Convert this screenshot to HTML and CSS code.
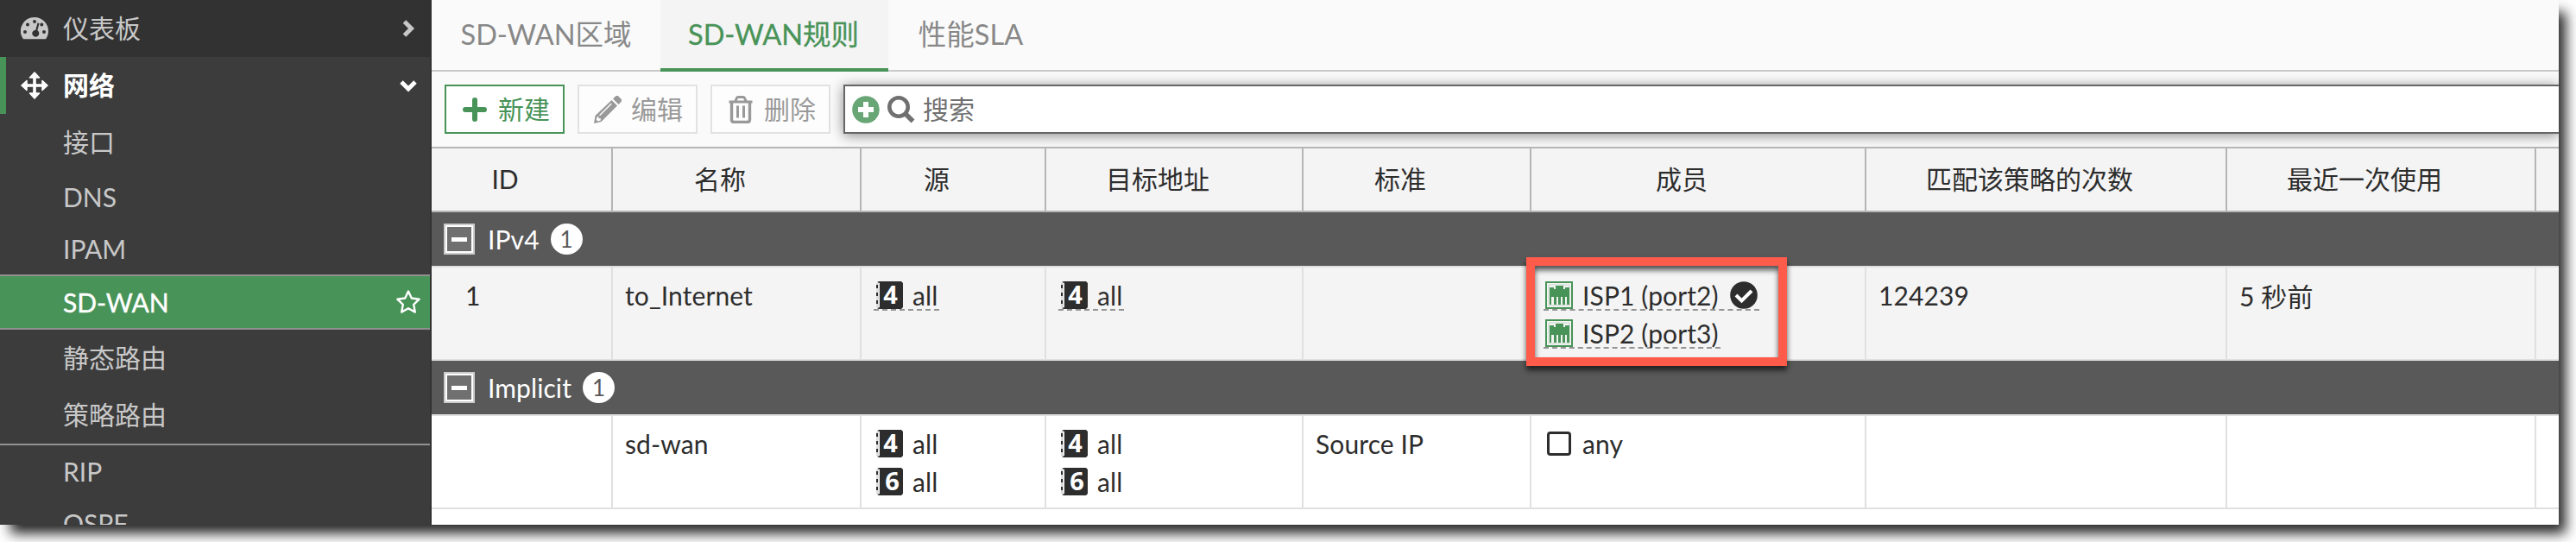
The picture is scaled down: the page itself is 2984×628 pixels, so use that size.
FILE: index.html
```html
<!DOCTYPE html>
<html lang="zh-CN">
  <head>
    <meta charset="UTF-8" />
    <meta name="viewport" content="width=device-width, initial-scale=1.0" />
    <link rel="stylesheet" href="styles.css">
    <title>SD-WAN规则</title>
  </head>
  <body>
    <!-- shared icons -->
    <svg class="sprite">
      <symbol id="book" viewBox="0 0 32 32">
        <path d="M1 2h3v28H1z" fill="#ddd" />
        <path d="M2 4v26" stroke="#2d2d2d" stroke-width="2" stroke-dasharray="4 5" />
        <path d="M4 0h26l2 2v28l-2 2H4l-2-1 3-1V2L2 1z" fill="#2d2d2d" />
      </symbol>
      <symbol id="port" viewBox="0 0 32 32">
        <path d="M1 1h30v30H1z" fill="#f4f4f4" stroke="#489358" stroke-width="2" />
        <path d="M4 4h24v24H4z" fill="none" stroke="#c4d9c8" />
        <path d="M5 7h5v2h2V5h9v4h2V7h5v20h-3v-9h-2v9h-3v-9h-2v9h-3v-9h-2v9h-3v-9H7v9H5z" fill="#489358" />
      </symbol>
    </svg>

    <div class="window">
      <nav class="sidebar">
        <a class="menu">
          <svg viewBox="0 0 32 32" width="32" height="32">
            <path fill="currentColor" fill-rule="evenodd" d="M16 3a16 16 0 0 1 16 16c0 3-.8 6-2.400 8.500-.3.500-.8.700-1.300.7H3.700c-.5 0-1-.2-1.300-.7A16 16 0 0 1 16 3zM16 6a2 2 0 1 0 0 4 2 2 0 0 0 0-4zM8 9.500a2 2 0 1 0 0 4 2 2 0 0 0 0-4zM24.300 9.500a2 2 0 1 0 0 4 2 2 0 0 0 0-4zM5 18a2 2 0 1 0 0 4 2 2 0 0 0 0-4zM27 18a2 2 0 1 0 0 4 2 2 0 0 0 0-4zM19.500 9.500l-2.200 8.200a4 4 0 1 0 2.100.6l2.100-8.300z" />
          </svg>
          <span>仪表板</span>
          <svg class="arrow" viewBox="0 0 30 30" width="30" height="30">
            <path d="M10.500 7l8 8-8 8" fill="none" stroke="currentColor" stroke-width="5" />
          </svg>
        </a>
        <a class="menu open">
          <svg viewBox="0 0 32 32" width="32" height="32">
            <path d="M16 4v24M4 16h24" stroke="currentColor" stroke-width="3.600" />
            <path d="M16 1l5.500 6h-11zM16 31l5.500-6h-11zM1 16l6-5.500v11zM31 16l-6-5.500v11z" fill="currentColor" stroke="currentColor" stroke-width="1.600" stroke-linejoin="round" />
          </svg>
          <span>网络</span>
          <svg class="arrow" viewBox="0 0 30 30" width="30" height="30">
            <path d="M7 11l8 8 8-8" fill="none" stroke="currentColor" stroke-width="5" />
          </svg>
        </a>
        <a class="sub cjk">接口</a>
        <a class="sub">DNS</a>
        <a class="sub">IPAM</a>
        <a class="sub selected">
          <span>SD-WAN</span>
          <svg class="arrow" viewBox="0 0 30 30" width="30" height="30">
            <path d="M15 2.500l3.800 8 8.900 1.200-6.500 6.100 1.600 8.800-7.800-4.300-7.800 4.300 1.600-8.800-6.500-6.100 8.900-1.200z" fill="none" stroke="currentColor" stroke-width="2.400" stroke-linejoin="round" />
          </svg>
        </a>
        <a class="sub cjk">静态路由</a>
        <a class="sub cjk">策略路由</a>
        <a class="sub divider">RIP</a>
        <a class="sub">OSPF</a>
      </nav>

      <main class="content">
        <div class="tabs">
          <a class="tab">SD-WAN区域</a>
          <a class="tab active">SD-WAN规则</a>
          <a class="tab">性能SLA</a>
        </div>

        <div class="toolbar">
          <button class="create">
            <svg viewBox="0 0 32 32" width="32" height="32">
              <path d="M16 5v22M5 16h22" stroke="currentColor" stroke-width="6" stroke-linecap="round" />
            </svg>
            <span>新建</span>
          </button>
          <button disabled>
            <svg viewBox="0 0 32 32" width="32" height="32">
              <path d="M22 3.500l2.600-2.600a3 3 0 0 1 4.200 0l2.300 2.300a3 3 0 0 1 0 4.200L28.500 10z" fill="currentColor" />
              <path fill="currentColor" fill-rule="evenodd" d="M20.500 5L27 11.500 8.500 30 0 32l1.500-9zM19.800 8.400L6 22.200l1 1L20.800 9.400zM3.500 24.500L2.800 27.800l1.600 1.600 3.400-.9v-2.200H5.500v-2.200z" />
            </svg>
            <span>编辑</span>
          </button>
          <button disabled>
            <svg viewBox="0 0 32 32" width="32" height="32" fill="none" stroke="currentColor">
              <path d="M2.500 7h27M10 6l1.500-3.500q.4-1 1.500-1h6q1.100 0 1.500 1L22 6" stroke-width="3" />
              <path d="M5.500 7v20.500q0 3 3 3h15q3 0 3-3V7" stroke-width="3.400" />
              <path d="M12.500 11.500v14M19.500 11.500v14" stroke-width="3" />
            </svg>
            <span>删除</span>
          </button>
          <div class="search">
            <svg viewBox="0 0 32 32" width="32" height="32">
              <circle cx="16" cy="16" r="15.800" fill="#69a675" />
              <path d="M16 7v18M7 16h18" stroke="#fff" stroke-width="6" />
            </svg>
            <svg viewBox="0 0 32 32" width="32" height="32" fill="none" stroke="#707070">
              <circle cx="13" cy="13" r="10.700" stroke-width="4.600" />
              <path d="M21 21l8.500 8.500" stroke-width="5.500" />
            </svg>
            <span>搜索</span>
          </div>
        </div>

        <table class="rules">
          <colgroup>
            <col class="w-id" />
            <col class="w-name" />
            <col class="w-source" />
            <col class="w-dest" />
            <col class="w-criteria" />
            <col class="w-members" />
            <col class="w-hits" />
            <col class="w-last" />
            <col />
          </colgroup>
          <thead>
            <tr>
              <th>ID</th>
              <th>名称</th>
              <th>源</th>
              <th>目标地址</th>
              <th>标准</th>
              <th>成员</th>
              <th>匹配该策略的次数</th>
              <th>最近一次使用</th>
              <th></th>
            </tr>
          </thead>
          <tbody>
            <tr class="group">
              <td colspan="9">
                <div class="group-title"><i class="collapse"></i><span>IPv4</span><b class="count">1</b></div>
              </td>
            </tr>
            <tr class="shaded">
              <td class="id">1</td>
              <td>to_Internet</td>
              <td>
                <div class="item link"><span class="addr"><svg><use href="#book" /></svg><b>4</b></span>all</div>
              </td>
              <td>
                <div class="item link"><span class="addr"><svg><use href="#book" /></svg><b>4</b></span>all</div>
              </td>
              <td></td>
              <td class="members">
                <div class="item link">
                  <svg class="port"><use href="#port" /></svg>ISP1 (port2)
                  <svg class="check" viewBox="0 0 32 32">
                    <circle cx="16" cy="16" r="15.800" fill="#2d2d2d" />
                    <path d="M7 16l6.500 6.500L25 11" fill="none" stroke="#fff" stroke-width="4" />
                  </svg>
                </div>
                <div class="item link"><svg class="port"><use href="#port" /></svg>ISP2 (port3)</div>
                <div class="highlight"></div>
              </td>
              <td>124239</td>
              <td class="last-used">5 秒前</td>
              <td></td>
            </tr>
            <tr class="group">
              <td colspan="9">
                <div class="group-title"><i class="collapse"></i><span>Implicit</span><b class="count">1</b></div>
              </td>
            </tr>
            <tr>
              <td></td>
              <td>sd-wan</td>
              <td>
                <div class="item"><span class="addr"><svg><use href="#book" /></svg><b>4</b></span>all</div>
                <div class="item"><span class="addr"><svg><use href="#book" /></svg><b class="v6">6</b></span>all</div>
              </td>
              <td>
                <div class="item"><span class="addr"><svg><use href="#book" /></svg><b>4</b></span>all</div>
                <div class="item"><span class="addr"><svg><use href="#book" /></svg><b class="v6">6</b></span>all</div>
              </td>
              <td>Source IP</td>
              <td>
                <div class="item"><i class="box"></i>any</div>
              </td>
              <td></td>
              <td></td>
              <td></td>
            </tr>
          </tbody>
        </table>
      </main>
    </div>
  </body>
</html>
```

FILE: styles.css
```css
/* Basic Style */
* {
  box-sizing: border-box;
}
body {
  margin: 0;
  height: 628px;
  overflow: hidden;
  background: #fff;
  color: #2d2d2d;
  font: 30px/32px Lato, "Noto Sans CJK SC", sans-serif;
}
svg {
  display: block;
  flex: none;
}
.sprite {
  position: absolute;
  width: 0;
  height: 0;
}
.window {
  display: flex;
  width: 2964px;
  height: 608px;
  background: #fff;
  box-shadow: 10px 12px 14px -2px rgba(0, 0, 0, 0.85);
}

/* Sidebar */
.sidebar {
  width: 500px;
  height: 608px;
  flex: none;
  overflow: hidden;
  background: #3c3c3c;
  border-right: 2px solid #323232;
  color: #c8c8c8;
}
.menu,
.sub {
  display: flex;
  align-items: center;
  height: 66px;
  padding: 0 10px 0 24px;
}
.menu {
  background: #323232;
}
.menu span {
  margin: -2px 0 0 17px;
}
.menu.open {
  background: #3c3c3c;
  border-left: 7px solid #489358;
  padding-left: 17px;
  color: #fff;
  font-weight: 700;
}
.arrow {
  margin-left: auto;
}
.sub {
  height: 60px;
  padding-left: 73px;
}
.sub.cjk {
  height: 66px;
  padding-bottom: 2px;
}
.sub.selected {
  height: 64px;
  background: #489358;
  border-top: 2px solid #919191;
  border-bottom: 2px solid #919191;
  color: #fff;
  -webkit-text-stroke: 0.4px #fff;
}
.sub.divider {
  height: 62px;
  border-top: 2px solid #919191;
}

/* Tabs */
.content {
  flex: 1;
  min-width: 0;
  height: 608px;
  overflow: hidden;
}
.tabs {
  display: flex;
  height: 83px;
  background: #fafafa;
  box-shadow: inset 0 -2px #c9c9c9;
}
.tab {
  width: 265px;
  font-size: 32.500px;
  line-height: 80px;
  text-align: center;
  color: #888;
}
.tab.active {
  width: 264px;
  padding-right: 2px;
  background: #f4f4f4;
  border-bottom: 4px solid #489358;
  color: #489358;
  -webkit-text-stroke: 0.3px #489358;
}
.tab:last-child {
  width: 191px;
}

/* Toolbar */
.toolbar {
  display: flex;
  gap: 15px;
  height: 89px;
  padding: 15px 0 0 15px;
  background: #fafafa;
  border-bottom: 2px solid #b5b5b5;
  overflow: hidden;
}
button {
  display: flex;
  align-items: center;
  gap: 11px;
  width: 139px;
  height: 57px;
  padding: 0 0 0 17px;
  border: 2px solid #e2e2e2;
  background: #fdfdfd;
  color: #999;
  font: inherit;
}
button span,
.search span {
  margin-top: -1px;
}
button.create {
  border-color: #489358;
  background: #fff;
  color: #489358;
}
.search {
  display: flex;
  align-items: center;
  gap: 9px;
  flex: 1;
  height: 57px;
  padding-left: 8px;
  border: 2px solid #666;
  border-right: 0;
  background: #fff;
  box-shadow: 0 2px 14px rgba(0, 0, 0, 0.45);
  color: #707070;
}

/* Rules table */
.rules {
  width: 100%;
  table-layout: fixed;
  border-collapse: separate;
  border-spacing: 0;
}
.w-id {
  width: 210px;
}
.w-name {
  width: 288px;
}
.w-source {
  width: 214px;
}
.w-dest {
  width: 298px;
}
.w-criteria {
  width: 264px;
}
.w-members {
  width: 388px;
}
.w-hits {
  width: 418px;
}
.w-last {
  width: 358px;
}
th {
  height: 74px;
  padding: 0 38px 2px 0;
  background: #f4f4f4;
  border-right: 2px solid #b5b5b5;
  border-bottom: 2px solid #b5b5b5;
  font-weight: 400;
  white-space: nowrap;
}
td {
  height: 108px;
  padding: 16px 0 0 14px;
  border-right: 2px solid #e0e0e0;
  border-bottom: 2px solid #e0e0e0;
  letter-spacing: 0.1px;
  vertical-align: top;
  white-space: nowrap;
}
th:last-child,
td:last-child {
  border-right: 0;
}
.shaded td {
  background: #f4f4f4;
}
td.id {
  padding-left: 39px;
}
td.last-used {
  padding-top: 17px;
}

/* Group rows */
.group td {
  height: 64px;
  padding: 13px 0 0 14px;
  background: #595959;
  color: #fff;
}
.group-title {
  display: flex;
  align-items: center;
  height: 36px;
}
.collapse {
  display: flex;
  align-items: center;
  justify-content: center;
  width: 36px;
  height: 36px;
  margin-right: 15px;
  border: 2px solid #ccc;
  background: #707070;
  box-shadow: inset 0 0 0 2px #fff;
}
.collapse::before {
  content: "";
  width: 18px;
  height: 5px;
  background: #fff;
}
.count {
  width: 37px;
  height: 36px;
  margin-left: 13px;
  border-radius: 50%;
  background: #fff;
  color: #595959;
  font-size: 26px;
  font-weight: 400;
  line-height: 36px;
  text-align: center;
}

/* Cell items */
.item {
  display: flex;
  width: max-content;
  height: 34px;
  margin-bottom: 10px;
  padding: 0 2px;
  border-bottom: 2px solid transparent;
}
.item.link {
  border-bottom: 2px dashed #949494;
}
.addr {
  display: grid;
  width: 32px;
  height: 32px;
  margin-right: 11px;
}
.addr svg,
.addr b {
  grid-area: 1 / 1;
  width: 32px;
  height: 32px;
}
.addr b {
  padding-left: 3px;
  color: #fff;
  font: 700 29px/30px "Open Sans", sans-serif;
  text-align: center;
}
.addr .v6 {
  padding-left: 7px;
}
.port {
  width: 32px;
  height: 32px;
  margin-right: 11px;
}
.check {
  width: 32px;
  height: 32px;
  margin-left: 13px;
}
.box {
  width: 28px;
  height: 28px;
  margin: 2px 13px 0 2px;
  border: 3px solid #2d2d2d;
  border-radius: 4px;
}

/* Marker frame over the members */
td.members {
  position: relative;
}
.highlight {
  position: absolute;
  top: -12px;
  left: -6px;
  width: 302px;
  height: 126px;
  border: 10px solid #ff5b4b;
  filter: drop-shadow(0 5px 3px rgba(0, 0, 0, 0.65));
}
```
